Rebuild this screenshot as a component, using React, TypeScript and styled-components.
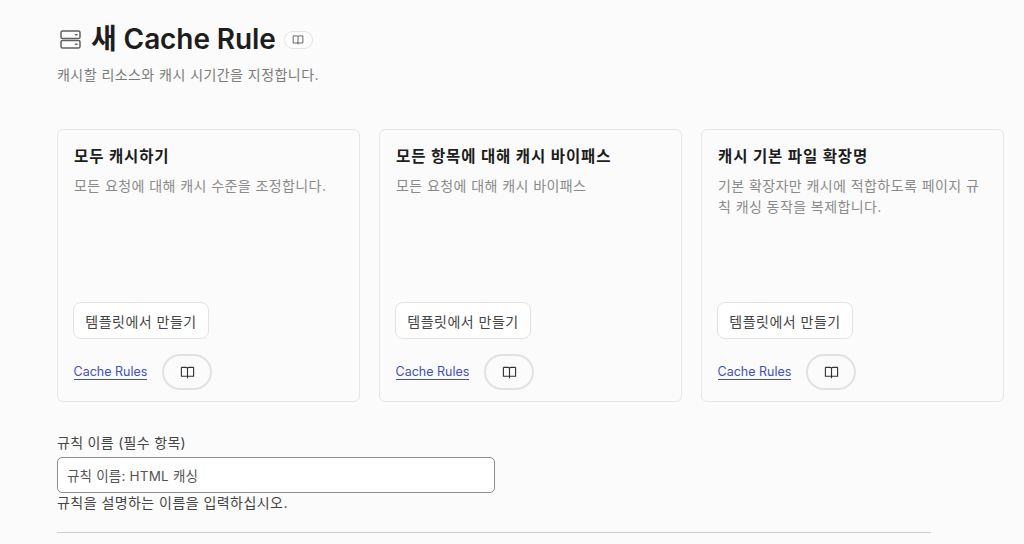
import React from "react";
import styled, { createGlobalStyle } from "styled-components";

const Global = createGlobalStyle`
  html, body { margin: 0; padding: 0; height: 544px; overflow: hidden; background: #fbfbfb; }
  body { font-family: Inter, "Noto Sans CJK KR", sans-serif; color: #1d1d1d; }
  * { box-sizing: border-box; }
`;
const Page = styled.div`
  padding: 20px 20px 0 57px;
  width: 1024px;
`;
const TitleRow = styled.div`
  display: flex;
  align-items: center;
  height: 38px;
`;
const IconSlot = styled.span`
  display: flex;
  margin-left: 3px;
`;
const Title = styled.h1`
  margin: 0 0 0 10px;
  font-size: 28px;
  font-weight: 600;
  line-height: 38px;
  letter-spacing: -0.1px;
  color: #1d1d1d;
`;
const DocPill = styled.span`
  display: inline-flex;
  align-items: center;
  justify-content: center;
  width: 29px;
  height: 18px;
  margin-left: 8px;
  margin-top: 1px;
  border: 1px solid #e4e4e4;
  border-radius: 9px;
  background: #fff;
  color: #555;
`;
const Subtitle = styled.p`
  margin: 8px 0 0;
  font-size: 14px;
  letter-spacing: 0.45px;
  line-height: 18px;
  color: #7a7a7a;
`;
const Cards = styled.div`
  display: grid;
  grid-template-columns: repeat(3, 303px);
  gap: 19px;
  margin-top: 45px;
`;
const Card = styled.section`
  height: 273px;
  padding: 16px 16px 11px;
  display: flex;
  flex-direction: column;
  background: #fbfbfb;
  border: 1px solid #e6e6e6;
  border-radius: 6px;
`;
const CardTitle = styled.h2`
  margin: 0;
  font-size: 15.5px;
  letter-spacing: 0.9px;
  line-height: 22px;
  font-weight: 700;
  color: #1d1d1d;
`;
const CardText = styled.p`
  margin: 7px 0 0;
  font-size: 14px;
  letter-spacing: 0.42px;
  line-height: 21px;
  color: #8a8a8a;
  flex: 1;
`;
const TemplateButton = styled.button`
  align-self: flex-start;
  width: 136px;
  height: 37px;
  margin-left: -1px;
  padding: 0;
  background: #fff;
  border: 1px solid #e3e3e3;
  border-radius: 8px;
  font: inherit;
  font-size: 14px;
  letter-spacing: 0.5px;
  color: #444;
`;
const LinkRow = styled.div`
  display: flex;
  align-items: center;
  gap: 15px;
  margin-top: 15px;
  margin-left: -0.5px;
`;
const DocLink = styled.a`
  font-size: 12.5px;
  line-height: 15px;
  color: #3f52b5;
  border-bottom: 1px solid #3f52b5;
`;
const DocButton = styled.button`
  display: flex;
  align-items: center;
  justify-content: center;
  width: 50px;
  height: 36px;
  padding: 0;
  background: #fbfbfb;
  border: 2px solid #e2e2e2;
  border-radius: 18px;
  color: #333;
`;
const Field = styled.div`
  margin-top: 32px;
`;
const Label = styled.label`
  display: block;
  font-size: 14px;
  letter-spacing: 0.3px;
  line-height: 18px;
  color: #444;
`;
const Input = styled.input`
  display: block;
  width: 438px;
  height: 36px;
  margin-top: 5px;
  padding: 0 9px;
  background: #fff;
  border: 1px solid #8e8e8e;
  border-radius: 5px;
  font: inherit;
  font-size: 13.5px;
  letter-spacing: 0.2px;
  color: #555;
`;
const Hint = styled.p`
  margin: 1px 0 0;
  font-size: 14px;
  letter-spacing: 0.45px;
  line-height: 18px;
  color: #444;
`;
const Divider = styled.hr`
  width: 874px;
  margin: 20px 0 0;
  border: 0;
  border-top: 1px solid #cfcfcf;
`;

const Book = ({ size }: { size: number }) => (
  <svg width={size} height={size} viewBox="0 0 16 16" fill="none" stroke="currentColor" strokeWidth="1.2">
    <path d="M1.5 2.5h5c1 0 1.5.4 1.5 1.2V14M14.5 2.5h-5C8.500 2.500 8 2.900 8 3.700M1.500 2.500v9.500h6.500M14.500 2.500v9.500H8" />
  </svg>
);
const Server = () => (
  <svg width="21" height="21" viewBox="0 0 21 21" fill="none" stroke="#606060" strokeWidth="1.5">
    <rect x="1" y="2" width="19" height="7.5" rx="1.6" />
    <rect x="1" y="11.5" width="19" height="7.5" rx="1.6" />
    <path d="M15.500 5.800h1.500M15.500 15.300h1.500" strokeLinecap="round" />
  </svg>
);

const cards = [
  { title: "모두 캐시하기", text: "모든 요청에 대해 캐시 수준을 조정합니다." },
  { title: "모든 항목에 대해 캐시 바이패스", text: "모든 요청에 대해 캐시 바이패스" },
  { title: "캐시 기본 파일 확장명", text: "기본 확장자만 캐시에 적합하도록 페이지 규칙 캐싱 동작을 복제합니다." },
];

export default function App() {
  return (
    <Page>
      <Global />
      <TitleRow>
        <IconSlot><Server /></IconSlot>
        <Title>새 Cache Rule</Title>
        <DocPill><Book size={12} /></DocPill>
      </TitleRow>
      <Subtitle>캐시할 리소스와 캐시 시기간을 지정합니다.</Subtitle>
      <Cards>
        {cards.map((c) => (
          <Card key={c.title}>
            <CardTitle>{c.title}</CardTitle>
            <CardText>{c.text}</CardText>
            <TemplateButton>템플릿에서 만들기</TemplateButton>
            <LinkRow>
              <DocLink>Cache Rules</DocLink>
              <DocButton><Book size={15} /></DocButton>
            </LinkRow>
          </Card>
        ))}
      </Cards>
      <Field>
        <Label>규칙 이름 (필수 항목)</Label>
        <Input defaultValue="규칙 이름: HTML 캐싱" />
        <Hint>규칙을 설명하는 이름을 입력하십시오.</Hint>
      </Field>
      <Divider />
    </Page>
  );
}
